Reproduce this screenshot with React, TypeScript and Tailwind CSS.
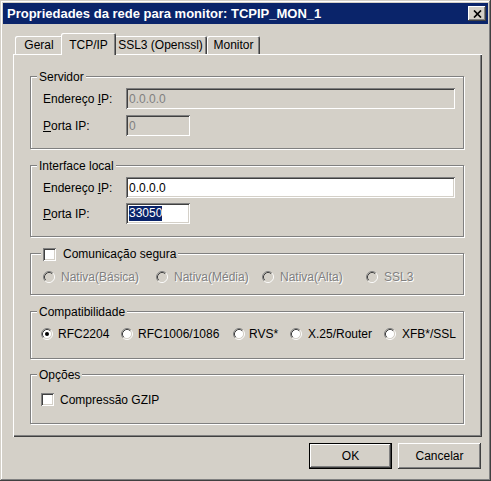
import React from "react";

const SUNKEN =
  "shadow-[inset_1px_1px_0_#808080,inset_-1px_-1px_0_#fff,inset_2px_2px_0_#404040,inset_-2px_-2px_0_#d4d0c8]";
const RAISED =
  "shadow-[inset_-1px_-1px_0_#404040,inset_1px_1px_0_#fff,inset_-2px_-2px_0_#808080]";
const DIS = "text-[#808080] [text-shadow:1px_1px_0_#fff]";

function Radio({ checked = false, disabled = false }: { checked?: boolean; disabled?: boolean }) {
  return (
    <svg width="12" height="12" viewBox="0 0 12 12" className="shrink-0">
      <circle cx="6" cy="6" r="4.5" fill={disabled ? "#d4d0c8" : "#fff"} />
      <path d="M2.11 9.89A5.5 5.5 0 0 1 9.89 2.11" fill="none" stroke="#808080" />
      <path d="M9.89 2.11A5.5 5.5 0 0 1 2.11 9.89" fill="none" stroke="#fff" />
      <path d="M2.82 9.18A4.5 4.5 0 0 1 9.18 2.82" fill="none" stroke="#404040" />
      <path d="M9.18 2.82A4.5 4.5 0 0 1 2.82 9.18" fill="none" stroke="#d4d0c8" />
      {checked && <circle cx="6" cy="6" r="2" fill="#000" />}
    </svg>
  );
}

function Checkbox() {
  return <div className={`w-[13px] h-[13px] shrink-0 bg-white ${SUNKEN}`} />;
}

function Legend({ children }: { children: React.ReactNode }) {
  return (
    <div className="absolute left-[6px] top-[-7px] px-[2px] bg-[#d4d0c8] leading-[14px] whitespace-nowrap">
      {children}
    </div>
  );
}

function Field({
  label,
  value,
  wide,
  disabled,
  selected,
}: {
  label: React.ReactNode;
  value: string;
  wide: boolean;
  disabled?: boolean;
  selected?: boolean;
}) {
  return (
    <div className="flex items-center h-[21px]">
      <div className="w-[83px] whitespace-nowrap">{label}</div>
      <div
        className={`${wide ? "w-[329px]" : "w-[64px]"} h-[21px] flex items-center pl-[3px] ${SUNKEN} ${
          disabled ? "bg-[#d4d0c8] text-[#808080]" : "bg-white text-black"
        }`}
      >
        {selected ? (
          <span className="bg-[#0a246a] text-white leading-[15px] px-[0px]">{value}</span>
        ) : (
          <span>{value}</span>
        )}
      </div>
    </div>
  );
}

const IpLabel = (
  <span>
    Endereço <span className="underline">I</span>P:
  </span>
);
const PortLabel = (
  <span>
    <span className="underline">P</span>orta IP:
  </span>
);

const GROUP = "relative w-[434px] border border-[#808080] shadow-[inset_1px_1px_0_#fff,1px_1px_0_#fff]";

export default function App() {
  return (
    <div
      className="w-[491px] h-[481px] bg-[#d4d0c8] p-[3px] flex flex-col text-[12px] text-black font-['Liberation_Sans',Arial,sans-serif] shadow-[inset_-1px_-1px_0_#404040,inset_1px_1px_0_#d4d0c8,inset_-2px_-2px_0_#808080,inset_2px_2px_0_#fff] select-none"
    >
      {/* Title bar */}
      <div className="h-[21px] bg-[#0a246a] flex items-center justify-between pl-[4px] pr-[2px]">
        <span className="text-white font-bold text-[13px] whitespace-nowrap">
          Propriedades da rede para monitor: TCPIP_MON_1
        </span>
        <div className={`w-[18px] h-[15px] bg-[#d4d0c8] flex items-center justify-center ${RAISED}`}>
          <svg width="9" height="8" viewBox="0 0 9 8">
            <path d="M1 0.5L8 7.5M8 0.5L1 7.5" stroke="#000" strokeWidth="1.7" />
          </svg>
        </div>
      </div>

      {/* Tabs */}
      <div className="mt-[9px] ml-[12px] h-[21px] flex items-end">
        <div className="w-[48px] h-[18px] flex items-center justify-center rounded-t-[2px] shadow-[inset_1px_1px_0_#fff,inset_-1px_0_0_#404040,inset_-2px_0_0_#808080]">
          Geral
        </div>
        <div className="relative z-10 -mx-[2px] -mb-[1px] w-[55px] h-[22px] bg-[#d4d0c8] flex items-start pt-[3px] justify-center rounded-t-[2px] shadow-[inset_1px_1px_0_#fff,inset_-1px_0_0_#404040,inset_-2px_0_0_#808080]">
          TCP/IP
        </div>
        <div className="w-[93px] h-[18px] flex items-center justify-center rounded-t-[2px] shadow-[inset_1px_1px_0_#fff,inset_-1px_0_0_#404040,inset_-2px_0_0_#808080]">
          SSL3 (Openssl)
        </div>
        <div className="w-[53px] h-[18px] flex items-center justify-center rounded-t-[2px] shadow-[inset_1px_1px_0_#fff,inset_-1px_0_0_#404040,inset_-2px_0_0_#808080]">
          Monitor
        </div>
      </div>

      {/* Panel */}
      <div
        className={`ml-[10px] w-[469px] h-[383px] flex flex-col pt-[22px] pl-[17px] shadow-[inset_1px_1px_0_#fff,inset_-1px_-1px_0_#404040,inset_-2px_-2px_0_#808080]`}
      >
        {/* Servidor */}
        <div className={`${GROUP} h-[73px] pt-[11px] pl-[12px] flex flex-col gap-[6px]`}>
          <Legend>Servidor</Legend>
          <Field label={IpLabel} value="0.0.0.0" wide disabled />
          <Field label={PortLabel} value="0" wide={false} disabled />
        </div>

        {/* Interface local */}
        <div className={`${GROUP} mt-[16px] h-[72px] pt-[11px] pl-[12px] flex flex-col gap-[5px]`}>
          <Legend>Interface local</Legend>
          <Field label={IpLabel} value="0.0.0.0" wide />
          <Field label={PortLabel} value="33050" wide={false} selected />
        </div>

        {/* Comunicação segura */}
        <div className={`${GROUP} mt-[16px] h-[42px] pt-[16px] pl-[12px]`}>
          <div className="absolute left-[10px] top-[-7px] px-[2px] bg-[#d4d0c8] flex items-center gap-[7px] leading-[14px] whitespace-nowrap">
            <Checkbox />
            <span>Comunicação segura</span>
          </div>
          <div className={`flex items-center h-[14px] ${DIS}`}>
            <div className="w-[113px] flex items-center gap-[6px]">
              <Radio disabled />
              <span>Nativa(Básica)</span>
            </div>
            <div className="w-[106px] flex items-center gap-[6px]">
              <Radio disabled />
              <span>Nativa(Média)</span>
            </div>
            <div className="w-[104px] flex items-center gap-[6px]">
              <Radio disabled />
              <span>Nativa(Alta)</span>
            </div>
            <div className="flex items-center gap-[6px]">
              <Radio disabled />
              <span>SSL3</span>
            </div>
          </div>
        </div>

        {/* Compatibilidade */}
        <div className={`${GROUP} mt-[16px] h-[48px] pt-[15px] pl-[10px]`}>
          <Legend>Compatibilidade</Legend>
          <div className="flex items-center h-[14px]">
            <div className="w-[80px] flex items-center gap-[5px]">
              <Radio checked />
              <span>RFC2204</span>
            </div>
            <div className="w-[112px] flex items-center gap-[5px]">
              <Radio />
              <span>RFC1006/1086</span>
            </div>
            <div className="w-[57px] flex items-center gap-[4px]">
              <Radio />
              <span>RVS*</span>
            </div>
            <div className="w-[94px] flex items-center gap-[6px]">
              <Radio />
              <span>X.25/Router</span>
            </div>
            <div className="flex items-center gap-[6px]">
              <Radio />
              <span>XFB*/SSL</span>
            </div>
          </div>
        </div>

        {/* Opções */}
        <div className={`${GROUP} mt-[15px] h-[50px] pt-[18px] pl-[10px]`}>
          <Legend>Opções</Legend>
          <div className="flex items-center gap-[6px] h-[13px]">
            <Checkbox />
            <span>Compressão GZIP</span>
          </div>
        </div>
      </div>

      {/* Buttons */}
      <div className="mt-[6px] flex justify-end gap-[6px] pr-[7px]">
        <div className={`w-[83px] h-[26px] border border-black flex items-center justify-center ${RAISED}`}>
          OK
        </div>
        <div className={`w-[83px] h-[26px] flex items-center justify-center ${RAISED}`}>
          Cancelar
        </div>
      </div>
    </div>
  );
}
